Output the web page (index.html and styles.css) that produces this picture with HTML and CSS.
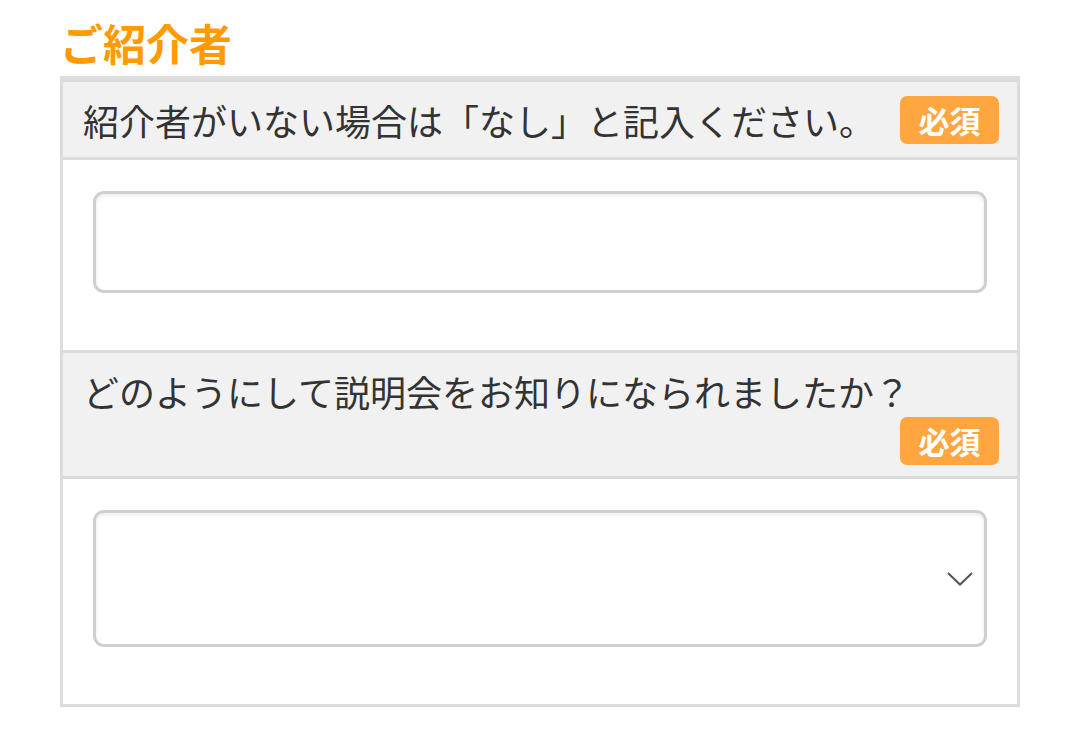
FILE: index.html
```html
<!DOCTYPE html>
<html lang="ja">
<head>
  <meta charset="UTF-8">
  <title>ご紹介者</title>
  <link rel="stylesheet" href="styles.css">
</head>
<body>
  <section class="entry">
    <h2 class="entry__title">ご紹介者</h2>
    <div class="entry__box">
      <div class="entry__head">
        <span class="entry__label">紹介者がいない場合は「なし」と記入ください。</span>
        <span class="entry__badge">必須</span>
      </div>
      <div class="entry__body">
        <input class="entry__input" type="text">
      </div>
      <div class="entry__head">
        <span class="entry__label">どのようにして説明会をお知りになられましたか？</span>
        <span class="entry__badge">必須</span>
      </div>
      <div class="entry__body">
        <div class="entry__select">
          <svg class="entry__chevron" width="26" height="14" viewBox="0 0 26 14">
            <polyline points="1,1 13,12.5 25,1" fill="none" stroke="#555" stroke-width="2"/>
          </svg>
        </div>
      </div>
    </div>
  </section>
</body>
</html>
```

FILE: styles.css
```css
body {
  margin: 0;
  background: #fff;
  font-family: "Noto Sans CJK JP", "Noto Sans", sans-serif;
  color: #333;
}
.entry {
  width: 960px;
  margin: 0 0 0 60px;
  padding-top: 14px;
}
.entry__title {
  margin: 0 0 6px;
  font-size: 43px;
  line-height: 56px;
  font-weight: 700;
  color: #ff9a00;
}
.entry__box {
  border: 3px solid #dcdcdc;
  border-top-width: 6px;
}
.entry__head {
  display: flex;
  flex-wrap: wrap;
  align-items: center;
  padding: 12px 18px 11px 20px;
  background: #f1f1f1;
  border-bottom: 3px solid #dcdcdc;
}
.entry__body + .entry__head {
  border-top: 3px solid #dcdcdc;
}
.entry__label {
  font-size: 36px;
  line-height: 52px;
}
.entry__badge {
  margin-left: auto;
  width: 99px;
  height: 48px;
  line-height: 48px;
  border-radius: 7px;
  background: #ffa640;
  color: #fff;
  font-size: 31px;
  font-weight: 700;
  text-align: center;
}
.entry__body {
  padding: 31px 30px 57px;
}
.entry__input,
.entry__select {
  display: block;
  box-sizing: border-box;
  width: 100%;
  margin: 0;
  border: 3px solid #cfcfcf;
  border-radius: 11px;
  background: #fff;
  box-shadow: inset 0 2px 4px rgba(0, 0, 0, 0.08);
}
.entry__input {
  height: 102px;
}
.entry__select {
  height: 137px;
  display: flex;
  align-items: center;
  justify-content: flex-end;
  padding-right: 11px;
}
```
